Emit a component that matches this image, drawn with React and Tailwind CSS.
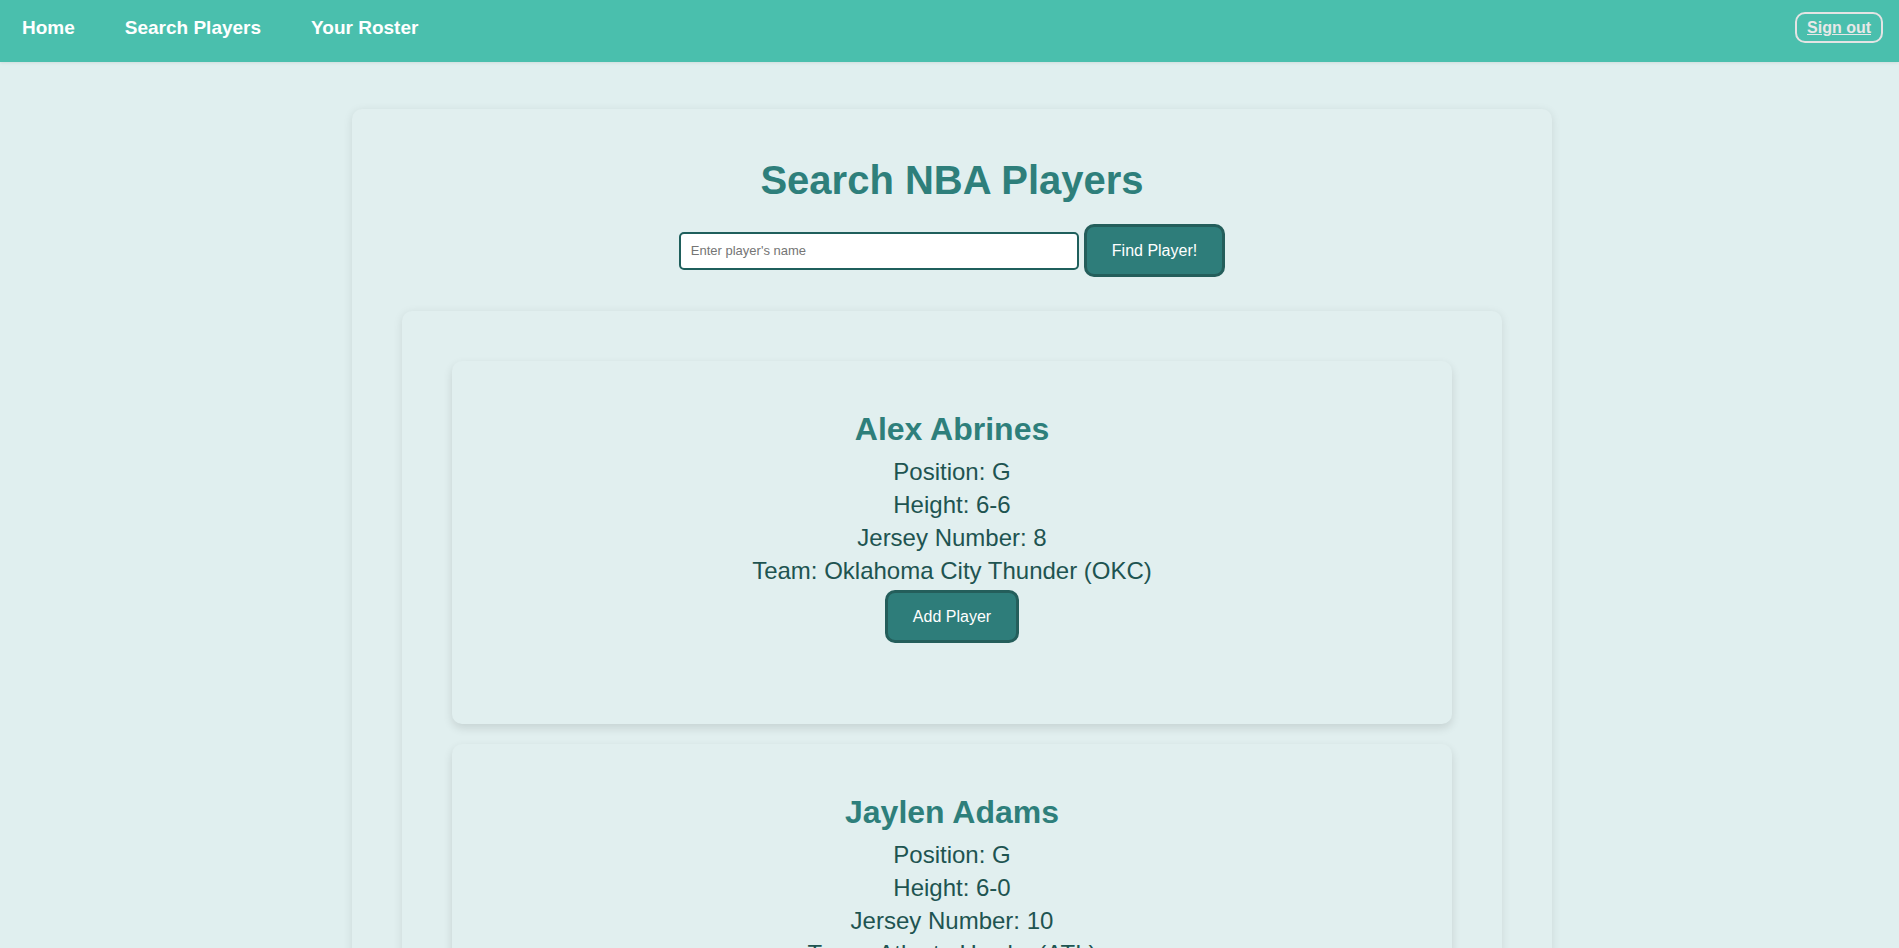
const players = [
  { name: 'Alex Abrines', position: 'G', height: '6-6', jersey: '8', team: 'Oklahoma City Thunder (OKC)' },
  { name: 'Jaylen Adams', position: 'G', height: '6-0', jersey: '10', team: 'Atlanta Hawks (ATL)' },
  { name: 'Steven Adams', position: 'C', height: '6-11', jersey: '12', team: 'Oklahoma City Thunder (OKC)' },
]

function PlayerCard({ p }) {
  return (
    <div className="mb-[20px] flex flex-col items-center rounded-[10px] bg-[#e1efef] pb-[81px] pt-[50px] text-center shadow-[0_4px_10px_rgba(0,0,0,0.12)]">
      <h2 className="text-[32px] font-bold leading-[37px] text-[#2e7f7b]">{p.name}</h2>
      <div className="mt-[7px] text-[24px] leading-[33px] text-[#1e5451]">
        <p>Position: {p.position}</p>
        <p>Height: {p.height}</p>
        <p>Jersey Number: {p.jersey}</p>
        <p>Team: {p.team}</p>
      </div>
      <button
        type="button"
        className="mt-[3px] h-[53px] rounded-[10px] border-[3px] border-[#245e5b] bg-[#2e7d7a] px-[25px] text-[16px] text-white"
      >
        Add Player
      </button>
    </div>
  )
}

export default function App() {
  return (
    <div className="min-h-screen bg-[#e0efef] font-['Liberation_Sans',Arial,sans-serif]">
      <nav className="flex h-[62px] items-center bg-[#4abfad] pb-[7px] pl-[22px] pr-[16px] shadow-[0_1px_3px_rgba(0,0,0,0.08)]">
        <div className="flex gap-[50px] text-[19px] font-bold leading-[22px] text-white">
          <a>Home</a>
          <a>Search Players</a>
          <a>Your Roster</a>
        </div>
        <button
          type="button"
          className="ml-auto h-[31px] rounded-[10px] border-2 border-[#e4e4e4] px-[10px] text-[16px] font-bold text-[#e8e8e8] underline"
        >
          Sign out
        </button>
      </nav>

      <div className="pl-[5px]">
        <main className="mx-auto mt-[47px] w-[1200px] rounded-[10px] bg-[#e1efef] px-[50px] pt-[48px] shadow-[0_2px_10px_rgba(0,0,0,0.1)]">
          <h1 className="text-center text-[40px] font-bold leading-[46px] text-[#2e7f7b]">
            Search NBA Players
          </h1>
          <div className="mt-[21px] flex items-center justify-center gap-[5px]">
            <input
              type="text"
              placeholder="Enter player's name"
              className="h-[38px] w-[400px] rounded-[5px] border-2 border-[#1f5f5c] bg-white px-[10px] text-[13px] outline-none placeholder:text-[#757575]"
            />
            <button
              type="button"
              className="h-[53px] rounded-[10px] border-[3px] border-[#245e5b] bg-[#2e7d7a] px-[25px] text-[16px] text-white"
            >
              Find Player!
            </button>
          </div>

          <section className="mt-[34px] rounded-[10px] bg-[#e1efef] px-[50px] pb-[30px] pt-[50px] shadow-[0_2px_10px_rgba(0,0,0,0.1)]">
            {players.map((p) => (
              <PlayerCard key={p.name} p={p} />
            ))}
          </section>
        </main>
      </div>
    </div>
  )
}
